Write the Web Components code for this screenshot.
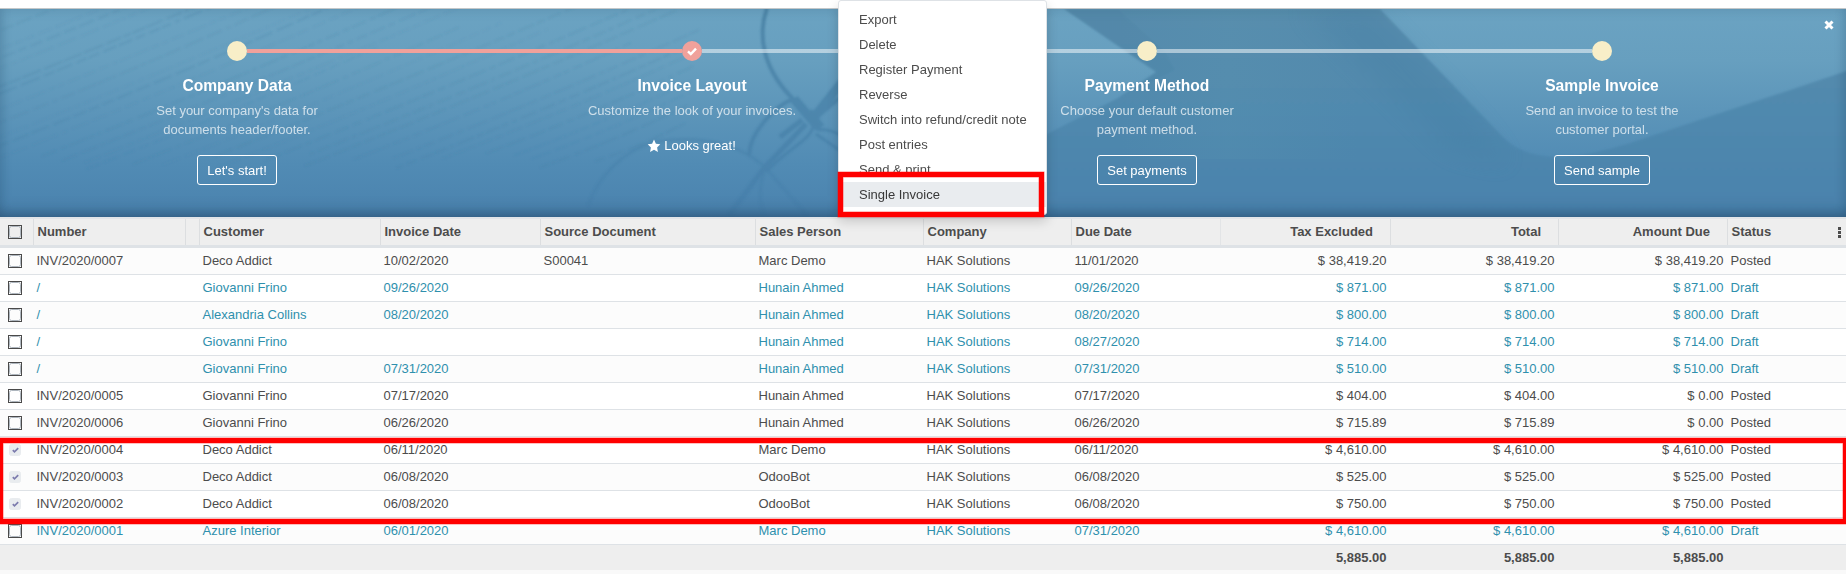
<!DOCTYPE html>
<html lang="en">
<head>
<meta charset="utf-8">
<title>Invoices</title>
<style>
html,body{margin:0;padding:0}
body{width:1846px;height:574px;overflow:hidden;background:#f9f9f9;color:#4c4c4c;font:13px/19.5px "Liberation Sans",Arial,sans-serif;position:relative}
</style>
</head>
<body>
<invoice-app></invoice-app>
<script>
const define=(name,html,setup)=>{
  const t=document.createElement('template');t.innerHTML=html;
  customElements.define(name,class extends HTMLElement{
    constructor(){super();this.attachShadow({mode:'open'}).append(t.content.cloneNode(true));}
    connectedCallback(){if(setup&&!this.ready){this.ready=true;setup(this,this.shadowRoot);}}
  });
};

define('check-box',`<style>
:host{display:block;width:14px;height:14px;box-sizing:border-box;border:1px solid #4a4a4a;padding:0}
.in{box-sizing:border-box;width:12px;height:12px;border:1px solid #adb5bd;border-radius:2.5px;display:grid;place-items:center}
svg{display:none;width:7px;height:6px}
:host([checked]){border-color:transparent}
:host([checked]) .in{background:#e9ecef;border-color:#e9ecef}
:host([checked]) svg{display:block}
</style><div class="in"><svg viewBox="0 0 7 6"><path d="M.8 3.1 2.5 4.8 6.2 1.2" fill="none" stroke="#7c7bad" stroke-width="1.7"/></svg></div>`);

define('banner-art',`<style>:host{display:block;position:absolute;inset:0}svg{display:block}</style>
<svg width="1846" height="208" viewBox="0 9 1846 208">
<defs>
<linearGradient id="base" x1="0" y1="0" x2="0" y2="1"><stop offset="0" stop-color="#6ba3c2"/><stop offset=".25" stop-color="#679fbf"/><stop offset=".75" stop-color="#518bb4"/><stop offset="1" stop-color="#4a82ae"/></linearGradient>
<linearGradient id="dark" gradientUnits="userSpaceOnUse" x1="0" y1="9" x2="0" y2="217"><stop offset="0" stop-color="#578cac"/><stop offset=".5" stop-color="#5089ae"/><stop offset="1" stop-color="#4a82ad"/></linearGradient>
<linearGradient id="ink" gradientUnits="userSpaceOnUse" x1="0" y1="9" x2="0" y2="217"><stop offset="0" stop-color="#437b9e"/><stop offset=".5" stop-color="#4781a8"/><stop offset="1" stop-color="#477fab"/></linearGradient>
<linearGradient id="mid" x1="0" x2="1"><stop offset="0" stop-color="#62a0b4" stop-opacity="0"/><stop offset=".45" stop-color="#62a0b4" stop-opacity=".3"/><stop offset="1" stop-color="#62a0b4" stop-opacity="0"/></linearGradient>
<filter id="b1"><feGaussianBlur stdDeviation=".8"/></filter><filter id="b2"><feGaussianBlur stdDeviation="1.1"/></filter><filter id="b3" x="-30%" y="-30%" width="160%" height="160%"><feGaussianBlur stdDeviation="12"/></filter>
</defs>
<rect y="9" width="1846" height="208" fill="url(#base)"/>
<g id="lines" fill="none" stroke="#3f7698" stroke-width="2" filter="url(#b2)"></g>
<g fill="none" stroke="url(#ink)" filter="url(#b1)" opacity=".72">
<path stroke-width="4" d="M767 8C757 36 763 70 795 101"/>
<path stroke-width="9" d="M794 99L812 120L842 82"/>
<path stroke-width="4" d="M842 96L818 116M793 99C775 106 750 132 749 155"/>
<path stroke-width="5" d="M802 120L780 137M806 124L764 168L730 214"/>
<path stroke-width="3" d="M814 124C810 142 790 146 766 172M818 130Q828 128 842 136M816 134L842 152"/>
<path stroke-width="2.6" opacity=".7" d="M588 206C598 176 624 150 655 142C700 134 738 144 764 166L806 214M764 172C758 190 760 204 764 214"/>
<path stroke-width="10" d="M808 112L820 128"/>
</g>
<g filter="url(#b1)">
<path fill="url(#dark)" d="M1064 9H1380L1503 137Q1524 158 1562 157Q1592 155 1630 143L1856 68V218H1030V140L1047 134L1118 98L1156 72Z"/>
<path fill="#457e9f" opacity=".2" d="M1064 9H1118L1166 53L1175 70L1118 98L1156 72Z"/>
</g>
<path fill="#39749b" opacity=".16" filter="url(#b3)" d="M1300 9H1372L1480 125L1510 165L1450 150Z"/>
<rect x="1120" y="9" width="240" height="150" fill="url(#mid)" opacity=".45"/>
</svg>`,(h,r)=>{
  const g=r.getElementById('lines');let o='',seed=7;
  const rnd=()=>(seed=(seed*16807)%2147483647)/2147483647;
  for(let i=0;i<40;i++){
    const c=30+i*12.5+rnd()*7;
    const x0=Math.max(-10,(c-170)/.42+rnd()*40), x1=Math.min(745-i*2,x0+260+rnd()*330);
    if(x1<x0+60)continue;
    const ya=c-x0*.42, yb=c-x1*.42;
    let dash='';for(let k=0;k<12;k++)dash+=(4+rnd()*17).toFixed(1)+' '+(1.5+rnd()*4).toFixed(1)+' ';
    o+=`<path d="M${x0} ${ya}Q${(x0+x1)/2} ${(ya+yb)/2+5} ${x1} ${yb}" stroke-dasharray="${dash}" opacity="${(.06+rnd()*.13).toFixed(2)}"/>`;
  }
  g.innerHTML=o;
});

define('onboarding-step',`<style>
:host{flex:1 1 0;display:flex;flex-direction:column;align-items:center;text-align:center;color:#fff}
.track{align-self:stretch;display:flex;align-items:center;height:20px}
.track i{flex:1;height:4px;background:var(--before,rgba(255,255,255,.5))}
.track i:last-child{background:var(--after,rgba(255,255,255,.5))}
.dot{width:20px;height:20px;border-radius:50%;background:#f8eec8;display:grid;place-items:center}
.dot svg{display:none}
:host([done]) .dot{background:#f0a19b}
:host([done]) .dot svg{display:block}
h4{margin:13px 0 3px;font-size:15.6px;line-height:24px;font-weight:700}
p{margin:0;width:var(--w,180px);color:rgba(255,255,255,.7);line-height:19px}
::slotted(*){display:block}
</style><div class="track"><i></i><span class="dot"><svg width="10" height="9" viewBox="0 0 10 9"><path d="M1 4.4 3.8 7.1 9 1.7" fill="none" stroke="#fff" stroke-width="2.4"/></svg></span><i></i></div>
<h4></h4><p></p><slot></slot>`,(h,r)=>{
  r.querySelector('h4').textContent=h.getAttribute('heading');
  r.querySelector('p').textContent=h.getAttribute('text');
});

define('outline-button',`<style>
:host{display:block;margin-top:16px}
button{display:block;box-sizing:border-box;height:30px;border:1px solid #fff;border-radius:3px;background:none;color:#fff;font:13px/20px "Liberation Sans",Arial,sans-serif;padding:1px 9.5px 0}
</style><button><slot></slot></button>`);

define('step-praise',`<style>:host{display:flex!important;align-items:center;margin-top:16px;margin-right:1px;gap:3px;line-height:19px}</style>
<svg width="14" height="14" viewBox="0 0 14 14"><path fill="#fff" d="M7 .6 8.9 4.7 13.3 5.3 10.1 8.4 10.9 12.9 7 10.8 3.1 12.9 3.9 8.4.7 5.3 5.1 4.7Z"/></svg><slot></slot>`);

define('onboarding-banner',`<style>
:host{display:block;position:relative;box-sizing:border-box;height:209px;border-top:1px solid #c3c7c9}
.steps{position:relative;display:flex;width:1820px;margin-left:9.5px;padding-top:32px}
.shade{position:absolute;inset:0;box-shadow:inset 0 -10px 16px -8px rgba(20,50,75,.5),inset 0 0 12px rgba(35,75,100,.22)}
.close{position:absolute;right:12px;top:11px;display:block}
</style><banner-art></banner-art><div class="shade"></div>
<div class="steps">
<onboarding-step style="--before:transparent;--after:#f0a19b" heading="Company Data" text="Set your company's data for documents header/footer."><outline-button>Let's start!</outline-button></onboarding-step>
<onboarding-step done style="--before:#f0a19b;--w:230px" heading="Invoice Layout" text="Customize the look of your invoices."><step-praise>Looks great!</step-praise></onboarding-step>
<onboarding-step heading="Payment Method" text="Choose your default customer payment method."><outline-button>Set payments</outline-button></onboarding-step>
<onboarding-step style="--after:transparent" heading="Sample Invoice" text="Send an invoice to test the customer portal."><outline-button>Send sample</outline-button></onboarding-step>
</div>
<svg class="close" width="10" height="10" viewBox="0 0 10 10"><path d="M1.5 1.5 8.5 8.5M8.5 1.5 1.5 8.5" stroke="#fff" stroke-width="3"/></svg>`);

define('data-row',`<style>
:host{display:grid;grid-template-columns:33px 152px 14px 181px 160px 215px 168px 148px 149px 170px 168px 169px 119px;box-sizing:border-box;height:27px;border-bottom:1px solid #dee2e6;background:#fff;color:#4c4c4c}
:host([odd]){background:#fcfcfc}
:host([draft]){color:#2f90ad}
:host([kind=head]){height:31px;border-top:2px solid #e2e5e8;border-bottom:3px solid #dee2e6;background:#eee;font-weight:700}
:host([kind=foot]){height:25px;border:0;background:#eee;font-weight:700}
div{box-sizing:border-box;padding:0 3.5px;display:flex;align-items:center;white-space:nowrap;min-width:0}
.num{justify-content:flex-end}
.sel{padding-left:8px}
:host([kind=head]) div+div{border-left:1px solid #dcdee0}
:host([kind=head]) .c8{border-left-color:#e2e4e6}
:host([kind=head]) .num{padding-right:17px}
.last{justify-content:space-between}
.kebab{display:block;margin-right:1.5px}
</style>`,(h,r)=>{
  const head=h.getAttribute('kind')==='head',foot=h.getAttribute('kind')==='foot';
  const cells=h.getAttribute('cells').split('|');
  const sel=document.createElement('div');sel.className='sel';
  if(!foot){const c=document.createElement('check-box');if(h.hasAttribute('checked'))c.setAttribute('checked','');sel.append(c);}
  r.append(sel);
  cells.forEach((t,i)=>{
    const d=document.createElement('div');d.textContent=t;d.className='c'+i+(i>7&&i<11?' num':'');
    if(i===11&&head){d.classList.add('last');d.textContent='';const s=document.createElement('span');s.textContent=t;d.append(s);
      d.insertAdjacentHTML('beforeend','<svg class="kebab" width="3" height="11" viewBox="0 0 3 11"><path fill="#4c4c4c" d="M0 0h3v3H0zM0 4h3v3H0zM0 8h3v3H0z"/></svg>');}
    r.append(d);
  });
});

define('invoice-list',`<style>:host{display:block}</style>`,(h,r)=>{
  const rows=[
   ['INV/2020/0007','Deco Addict','10/02/2020','S00041','Marc Demo','11/01/2020','38,419.20','38,419.20','Posted'],
   ['/','Giovanni Frino','09/26/2020','','Hunain Ahmed','09/26/2020','871.00','871.00','Draft'],
   ['/','Alexandria Collins','08/20/2020','','Hunain Ahmed','08/20/2020','800.00','800.00','Draft'],
   ['/','Giovanni Frino','','','Hunain Ahmed','08/27/2020','714.00','714.00','Draft'],
   ['/','Giovanni Frino','07/31/2020','','Hunain Ahmed','07/31/2020','510.00','510.00','Draft'],
   ['INV/2020/0005','Giovanni Frino','07/17/2020','','Hunain Ahmed','07/17/2020','404.00','0.00','Posted'],
   ['INV/2020/0006','Giovanni Frino','06/26/2020','','Hunain Ahmed','06/26/2020','715.89','0.00','Posted'],
   ['INV/2020/0004','Deco Addict','06/11/2020','','Marc Demo','06/11/2020','4,610.00','4,610.00','Posted',1],
   ['INV/2020/0003','Deco Addict','06/08/2020','','OdooBot','06/08/2020','525.00','525.00','Posted',1],
   ['INV/2020/0002','Deco Addict','06/08/2020','','OdooBot','06/08/2020','750.00','750.00','Posted',1],
   ['INV/2020/0001','Azure Interior','06/01/2020','','Marc Demo','07/31/2020','4,610.00','4,610.00','Draft']];
  const add=(cells,attrs)=>{const e=document.createElement('data-row');e.setAttribute('cells',cells.join('|'));for(const k in attrs)if(attrs[k]!==false)e.setAttribute(k,attrs[k]);r.append(e);};
  add(['Number','','Customer','Invoice Date','Source Document','Sales Person','Company','Due Date','Tax Excluded','Total','Amount Due','Status'],{kind:'head'});
  rows.forEach((x,i)=>add([x[0],'',x[1],x[2],x[3],x[4],'HAK Solutions',x[5],'$ '+x[6],'$ '+x[6],'$ '+x[7],x[8]],{odd:i%2?false:'',draft:x[8]==='Draft'?'':false,checked:x[9]?'':false}));
  add(['','','','','','','','','5,885.00','5,885.00','5,885.00',''],{kind:'foot'});
});

define('menu-item',`<style>:host{display:block;height:25px;line-height:25px;padding-left:20px;color:#4c4c4c}:host([active]){background:#e9ecef;color:#383838}</style><slot></slot>`);

define('action-menu',`<style>:host{position:absolute;left:838px;top:0;width:209px;height:215px;box-sizing:border-box;border:1px solid #dee2e6;border-radius:3px;background:#fff;padding-top:6px;box-shadow:0 6px 12px rgba(0,0,0,.175)}</style><slot></slot>`);

define('red-frame',`<style>:host{position:absolute;box-sizing:border-box;border:5px solid #f00;box-shadow:0 0 0 .5px rgba(255,0,0,.5),inset 0 0 0 .5px rgba(255,0,0,.5)}</style>`);

define('invoice-app',`<style>
:host{display:block;position:relative;width:1846px;height:574px;overflow:hidden}
.bar{height:8px;background:#fff}
.pick{left:837.5px;top:171.5px;width:206px;height:45px}
.rows{left:-2.5px;top:437.5px;width:1850.5px;height:86px}
</style><div class="bar"></div><onboarding-banner></onboarding-banner><invoice-list></invoice-list>
<action-menu><menu-item>Export</menu-item><menu-item>Delete</menu-item><menu-item>Register Payment</menu-item><menu-item>Reverse</menu-item><menu-item>Switch into refund/credit note</menu-item><menu-item>Post entries</menu-item><menu-item>Send &amp; print</menu-item><menu-item active>Single Invoice</menu-item></action-menu>
<red-frame class="pick"></red-frame><red-frame class="rows"></red-frame>`);
</script>
</body>
</html>
